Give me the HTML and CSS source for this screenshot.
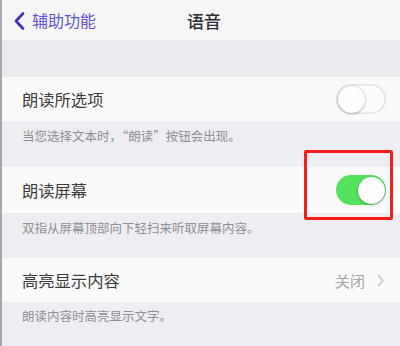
FILE: index.html
```html
<!DOCTYPE html>
<html lang="zh">
<head>
<meta charset="utf-8">
<link rel="stylesheet" href="styles.css">
</head>
<body>
<div class="screen">
  <div class="nav">
    <div class="back">
      <svg class="chev" width="11" height="18" viewBox="0 0 11 18"><path d="M9 1.5 L2 9 L9 16.5" fill="none" stroke="#3b30c2" stroke-width="2.6" stroke-linecap="round" stroke-linejoin="round"/></svg>
      <span class="back-text">辅助功能</span>
    </div>
    <div class="title">语音</div>
  </div>
  <div class="spacer"></div>
  <div class="row r1">
    <span class="label">朗读所选项</span>
    <span class="toggle off"><span class="knob"></span></span>
  </div>
  <div class="foot f1">当您选择文本时，“朗读”按钮会出现。</div>
  <div class="row r2">
    <span class="label">朗读屏幕</span>
    <span class="toggle on"><span class="knob"></span></span>
  </div>
  <div class="foot f2">双指从屏幕顶部向下轻扫来听取屏幕内容。</div>
  <div class="row r3">
    <span class="label">高亮显示内容</span>
    <span class="value">关闭<svg class="arrow" width="8" height="13" viewBox="0 0 8 13"><path d="M1.5 1.5 L6 6.5 L1.5 11.5" fill="none" stroke="#c4c4c9" stroke-width="1.6" stroke-linecap="round" stroke-linejoin="round"/></svg></span>
  </div>
  <div class="foot f3">朗读内容时高亮显示文字。</div>
  <div class="highlight"></div>
</div>
</body>
</html>
```
FILE: styles.css
```css
* { box-sizing: border-box; }
html, body { margin: 0; padding: 0; }
body {
  width: 400px;
  height: 346px;
  overflow: hidden;
  font-family: "Noto Sans CJK SC", "Noto Sans", sans-serif;
  background: #eeeef2;
}
.screen {
  position: relative;
  width: 400px;
  height: 346px;
  border-left: 2px solid #a8a8ac;
  display: flex;
  flex-direction: column;
  background: #eeeef2;
}
.nav {
  height: 40px;
  flex: none;
  background: #f6f6f8;
  position: relative;
  display: flex;
  align-items: center;
  justify-content: center;
}
.back {
  position: absolute;
  left: 12px;
  top: 0;
  height: 40px;
  display: flex;
  align-items: center;
  gap: 7px;
}
.chev { display: block; margin-top: 1px; }
.back-text {
  font-size: 16px;
  color: #5e55d8;
  letter-spacing: 0px;
}
.title {
  font-size: 17px;
  color: #2e2e30;
  font-weight: 500;
  margin-left: 6px;
}
.spacer {
  height: 37px;
  flex: none;
  background: #ebebef;
}
.row {
  flex: none;
  background: #fafafa;
  display: flex;
  align-items: center;
  justify-content: space-between;
  padding: 0 14px 0 20px;
}
.r1 { height: 44px; }
.r2 { height: 46px; }
.r3 { height: 44px; }
.label {
  font-size: 16.3px;
  color: #3a3a3c;
}
.toggle {
  position: relative;
  width: 50px;
  height: 30px;
  border-radius: 15px;
  display: block;
}
.toggle.off {
  background: #fbfbfb;
  box-shadow: inset 0 0 0 1.5px #e2e2e4;
}
.toggle.on {
  background: #55e25c;
}
.knob {
  position: absolute;
  top: 1.5px;
  width: 27px;
  height: 27px;
  border-radius: 50%;
  background: #fdfdfd;
  box-shadow: 0 1px 3px rgba(0,0,0,0.25), 0 0 0 0.5px rgba(0,0,0,0.08);
}
.off .knob { left: 1.5px; }
.on .knob { right: 1.5px; }
.value {
  display: flex;
  align-items: center;
  gap: 12px;
  font-size: 15px;
  color: #a3a3a8;
  margin-right: 1px;
}
.arrow { display: block; }
.foot {
  flex: none;
  font-size: 12.5px;
  color: #8d8d92;
  padding: 6px 0 0 20px;
  line-height: 18px;
}
.f1 { height: 46px; }
.f2 { height: 45px; }
.f3 { flex: 1; padding-top: 5px; }
.highlight {
  position: absolute;
  left: 302px;
  top: 150px;
  width: 89px;
  height: 70px;
  border: 3px solid #f81c1c;
  border-radius: 2px;
}
```
